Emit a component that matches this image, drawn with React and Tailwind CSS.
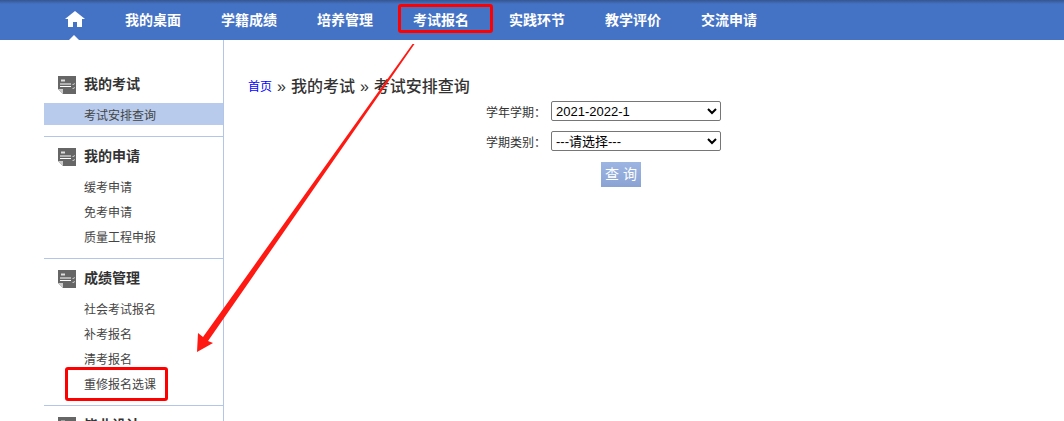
import React from 'react';

const cjk = { fontFamily: '"Liberation Sans", "Noto Sans CJK SC", sans-serif' };

const navItems = ['我的桌面', '学籍成绩', '培养管理', '考试报名', '实践环节', '教学评价', '交流申请'];

const groups = [
  { title: '我的考试', items: ['考试安排查询'], active: '考试安排查询' },
  { title: '我的申请', items: ['缓考申请', '免考申请', '质量工程申报'] },
  { title: '成绩管理', items: ['社会考试报名', '补考报名', '清考报名', '重修报名选课'] },
  { title: '毕业设计', items: [] },
];

const NoteIcon = () => (
  <svg width="18" height="18" viewBox="0 0 18 18" className="shrink-0">
    <path d="M0 0H18V18H5L0 13Z" fill="#666" />
    <path d="M0 13H5V18Z" fill="#ccc" />
    <path d="M2 8H13M2 10.5H13" stroke="#fff" strokeWidth="1" />
    <path d="M3 4.5H7" stroke="#ddd" strokeWidth="2" />
    <path d="M14.5 8l1 1 1-2M14.5 12l1 1 1-2" stroke="#ddd" strokeWidth="0.8" fill="none" />
  </svg>
);

const Group = ({ title, items, active }) => (
  <div className="border-b border-[#b4c6e7] ml-11 pb-2 mb-[9px] last:border-b-0">
    <div className="flex items-center h-[22px] mb-[7px] pl-[14px] gap-2">
      <NoteIcon />
      <span className="text-[14px] font-bold text-[#333] mb-px">{title}</span>
    </div>
    {items.map(i => (
      <div
        key={i}
        className={`text-[12px] text-[#444] pl-10 pt-[3px] flex items-center h-[22px] mb-[3px] ${i === active ? 'bg-[#b8cbec]' : ''}`}
      >
        {i}
      </div>
    ))}
  </div>
);

const Field = ({ label, value, options }) => (
  <div className="flex items-center h-[30px]">
    <span className="text-[12px] text-[#333] w-[65px] pt-[3px]">{label}</span>
    <select
      defaultValue={value}
      className="w-[170px] h-[20px] border border-[#767676] rounded-[2px] bg-white text-[13px] text-black"
      style={{ appearance: 'auto' }}
    >
      {options.map(o => <option key={o}>{o}</option>)}
    </select>
  </div>
);

export default function App() {
  return (
    <div className="relative w-[1064px] h-[421px] overflow-hidden bg-white" style={cjk}>
      <nav className="h-10 flex items-center bg-[linear-gradient(#35568f,#4472c4_4px,#4472c4)]">
        <div className="relative w-[125px] h-full flex items-center justify-center pl-6">
          <svg width="20" height="16" viewBox="0 0 20 16" className="mb-[3px]">
            <path d="M10 0L20 8H17V16H12V11H8V16H3V8H0Z" fill="#fff" />
          </svg>
          <span className="absolute bottom-0 left-[69px] border-x-[5px] border-x-transparent border-b-[5px] border-b-white" />
        </div>
        {navItems.map(n => (
          <a key={n} className="w-24 text-[14px] font-bold text-white">{n}</a>
        ))}
      </nav>
      <div className="flex h-[381px]">
        <aside className="w-[224px] shrink-0 border-r border-[#b4c6e7] pt-[34px]">
          {groups.map(g => <Group key={g.title} {...g} />)}
        </aside>
        <main className="flex-1 pt-[35px] pl-6">
          <div className="flex items-center h-[24px] text-[16px] font-medium text-[#333]">
            <a className="text-[12px] font-normal text-[#0000ff]">首页</a>
            <span className="mx-[5px]">»</span>我的考试<span className="mx-[5px]">»</span>考试安排查询
          </div>
          <div className="ml-[238px] mt-[-3px]">
            <Field label="学年学期：" value="2021-2022-1" options={['2021-2022-1']} />
            <Field label="学期类别：" value="---请选择---" options={['---请选择---']} />
            <button className="block ml-[115px] mt-[6px] w-10 h-[25px] bg-[linear-gradient(#9db5e2,#8aa3d3)] text-[14px] text-white">
              查 询
            </button>
          </div>
        </main>
      </div>

      {/* annotations on top of the screenshot */}
      <div className="absolute left-[398px] top-[4px] w-[95px] h-[29px] border-[3px] border-[#fe0000] rounded-[3px]" />
      <div className="absolute left-[65px] top-[367px] w-[103px] h-[34px] border-[3px] border-[#fe0000] rounded-[3px]" />
      <svg className="absolute left-0 top-0 pointer-events-none" width="1064" height="421">
        <path d="M414.5 44L208 341L213 343L197 352L198 333L203 337L412.5 44Z" fill="#fe1a12" />
      </svg>
    </div>
  );
}
